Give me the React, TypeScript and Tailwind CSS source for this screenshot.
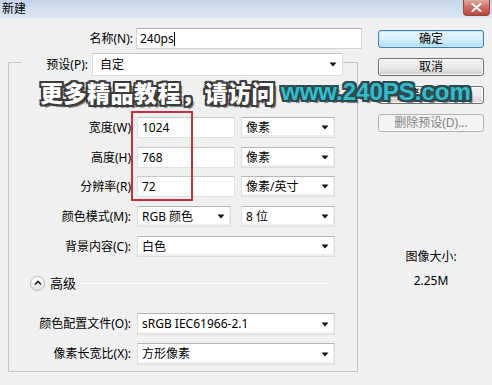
import React from 'react'

const Caret = () => (
  <svg width="8" height="5" viewBox="0 0 8 5" className="shrink-0">
    <path d="M0.5 0.5 H7.5 L4 4.5 Z" fill="#111" />
  </svg>
)

const Field = ({ value, className = '' }: { value: string; className?: string }) => (
  <div className={`h-[21px] bg-white border border-[#e2e2e2] border-t-[#c9c9c9] flex items-center pl-[4px] ${className}`}>
    {value}
  </div>
)

const Select = ({ value, className = '' }: { value: string; className?: string }) => (
  <div
    className={`h-[21px] bg-white border border-[#dcdcdc] border-t-[#b4b4b4] flex items-center justify-between pl-[4px] pr-[5px] shadow-[inset_-1px_-2px_0_#eeeeee] ${className}`}
  >
    <span>{value}</span>
    <Caret />
  </div>
)

const Row = ({ label, children, className = '' }: { label: string; children: React.ReactNode; className?: string }) => (
  <div className={`flex items-center ${className}`}>
    <div className="w-[122px] text-right">{label}</div>
    <div className="ml-[6px] flex items-center">{children}</div>
  </div>
)

const Button = ({ label, kind }: { label: string; kind: 'default' | 'normal' | 'disabled' }) => {
  const styles = {
    default:
      'border-[#3c7fb1] bg-gradient-to-b from-[#eaf6fd] via-[#d9f0fc] to-[#a7d9f5] text-black shadow-[inset_0_0_0_1px_#c6e9fb]',
    normal: 'border-[#707070] bg-gradient-to-b from-[#f2f2f2] via-[#ebebeb] to-[#cfcfcf] text-black shadow-[inset_0_0_0_1px_#fbfbfb]',
    disabled: 'border-[#adb2b5] bg-[#f4f4f4] text-[#838383]',
  }[kind]
  return (
    <div className={`h-[18px] w-[106px] rounded-[3px] border flex items-center justify-center leading-none ${styles}`}>
      {label}
    </div>
  )
}

const outline = (c: string) =>
  `2px 0 0 ${c}, -2px 0 0 ${c}, 0 2px 0 ${c}, 0 -2px 0 ${c}, 2px 2px 0 ${c}, -2px -2px 0 ${c}, 2px -2px 0 ${c}, -2px 2px 0 ${c}, 3px 3px 1px rgba(0,0,0,0.5)`

export default function App() {
  return (
    <div className="relative w-[492px] h-[385px] overflow-hidden bg-[#f0f0f0] text-[12px] text-black font-['Noto_Sans','Noto_Sans_CJK_SC',sans-serif] leading-[16px]">
      {/* title bar */}
      <div className="h-[18px] bg-gradient-to-b from-[#c5d6ea] to-[#dde7f2] flex items-start justify-between">
        <span className="pl-[2px] pt-[1px]">新建</span>
        <div className="mr-[2px] w-[27px] h-[16px] rounded-b-[4px] border border-t-0 border-[#8a4a44] bg-gradient-to-b from-[#e0aaa1] via-[#cf6a5d] to-[#c2443a] flex items-center justify-center">
          <svg width="11" height="9" viewBox="0 0 11 9">
            <path d="M1.5 1 L9.5 8 M9.5 1 L1.5 8" stroke="#fff" strokeWidth="2.2" strokeLinecap="round" />
          </svg>
        </div>
      </div>

      <div className="flex">
        {/* left column */}
        <div className="w-[370px]">
          <div className="mt-[10px] flex items-center">
            <div className="w-[133px] text-right">名称(N):</div>
            <div className="ml-[3px] w-[226px] h-[21px] bg-white border border-[#d0d2d6] border-t-[#abadb3] flex items-center pl-[3px]">
              240ps<span className="w-px h-[14px] bg-black" />
            </div>
          </div>

          <div className="ml-[8px] mt-[13px] w-[350px] h-[310px] border border-[#c2c2c2]">
            <div className="-mt-[10px] flex items-center h-[23px]">
              <div className="w-[13px]" />
              <div className="w-[70px] h-full bg-[#f0f0f0] flex items-center justify-end pr-[4px]">预设(P):</div>
              <div className="w-[251px] h-[23px] bg-white border border-[#dcdcdc] border-t-[#c3c3c3] flex items-center justify-between pl-[7px] pr-[5px]">
                <span>自定</span>
                <Caret />
              </div>
            </div>

            <Row label="宽度(W)" className="mt-[41px]">
              <Field value="1024" className="w-[98px]" />
              <Select value="像素" className="ml-[6px] w-[94px]" />
            </Row>
            <Row label="高度(H)" className="mt-[9px]">
              <Field value="768" className="w-[98px]" />
              <Select value="像素" className="ml-[6px] w-[94px]" />
            </Row>
            <Row label="分辨率(R)" className="mt-[8px]">
              <Field value="72" className="w-[98px]" />
              <Select value="像素/英寸" className="ml-[6px] w-[94px]" />
            </Row>
            <Row label="颜色模式(M):" className="mt-[9px]">
              <Select value="RGB 颜色" className="w-[94px]" />
              <Select value="8 位" className="ml-[10px] w-[94px]" />
            </Row>
            <Row label="背景内容(C):" className="mt-[9px]">
              <Select value="白色" className="w-[198px]" />
            </Row>

            <div className="mt-[18px] flex items-center h-[16px] pl-[21px] pr-[30px]">
              <div className="w-[15px] h-[15px] rounded-full border border-[#b9b9b9] bg-gradient-to-b from-white to-[#e4e4e4] flex items-center justify-center">
                <svg width="8" height="6" viewBox="0 0 8 6">
                  <path d="M1 4.5 L4 1.5 L7 4.5" stroke="#222" strokeWidth="1.6" fill="none" />
                </svg>
              </div>
              <span className="ml-[5px] text-[13px]">高级</span>
              <div className="ml-[4px] flex-1 h-px bg-[#c4c4c4] border-b border-white" />
            </div>

            <Row label="颜色配置文件(O):" className="mt-[22px]">
              <Select value="sRGB IEC61966-2.1" className="w-[198px] h-[22px]" />
            </Row>
            <Row label="像素长宽比(X):" className="mt-[8px]">
              <Select value="方形像素" className="w-[198px] h-[22px]" />
            </Row>
          </div>
        </div>

        {/* right column */}
        <div className="ml-[8px] w-[106px] mt-[12px] flex flex-col gap-[10px]">
          <Button label="确定" kind="default" />
          <Button label="取消" kind="normal" />
          <Button label="存储预设(S)..." kind="normal" />
          <Button label="删除预设(D)..." kind="disabled" />
          <div className="mt-[107px] text-center">图像大小:</div>
          <div className="-mt-[2px] text-center">2.25M</div>
        </div>
      </div>

      {/* red annotation box */}
      <div className="absolute left-[131px] top-[111px] w-[62px] h-[90px] border-2 border-[#c9303e]" />

      {/* watermark */}
      <div className="absolute left-[40px] top-[77px] flex items-center whitespace-nowrap leading-[30px] font-black">
        <span
          className="text-white text-[23px] tracking-[0.5px] font-['Noto_Sans_CJK_SC',sans-serif]"
          style={{ textShadow: outline('#3b3b3b') }}
        >
          更多精品教程，请访问
        </span>
        <span
          className="ml-[6px] text-[#35bccb] text-[24px] font-['Liberation_Sans',sans-serif] font-bold"
          style={{ textShadow: outline('#2b4a50') }}
        >
          www.240PS.com
        </span>
      </div>
    </div>
  )
}
